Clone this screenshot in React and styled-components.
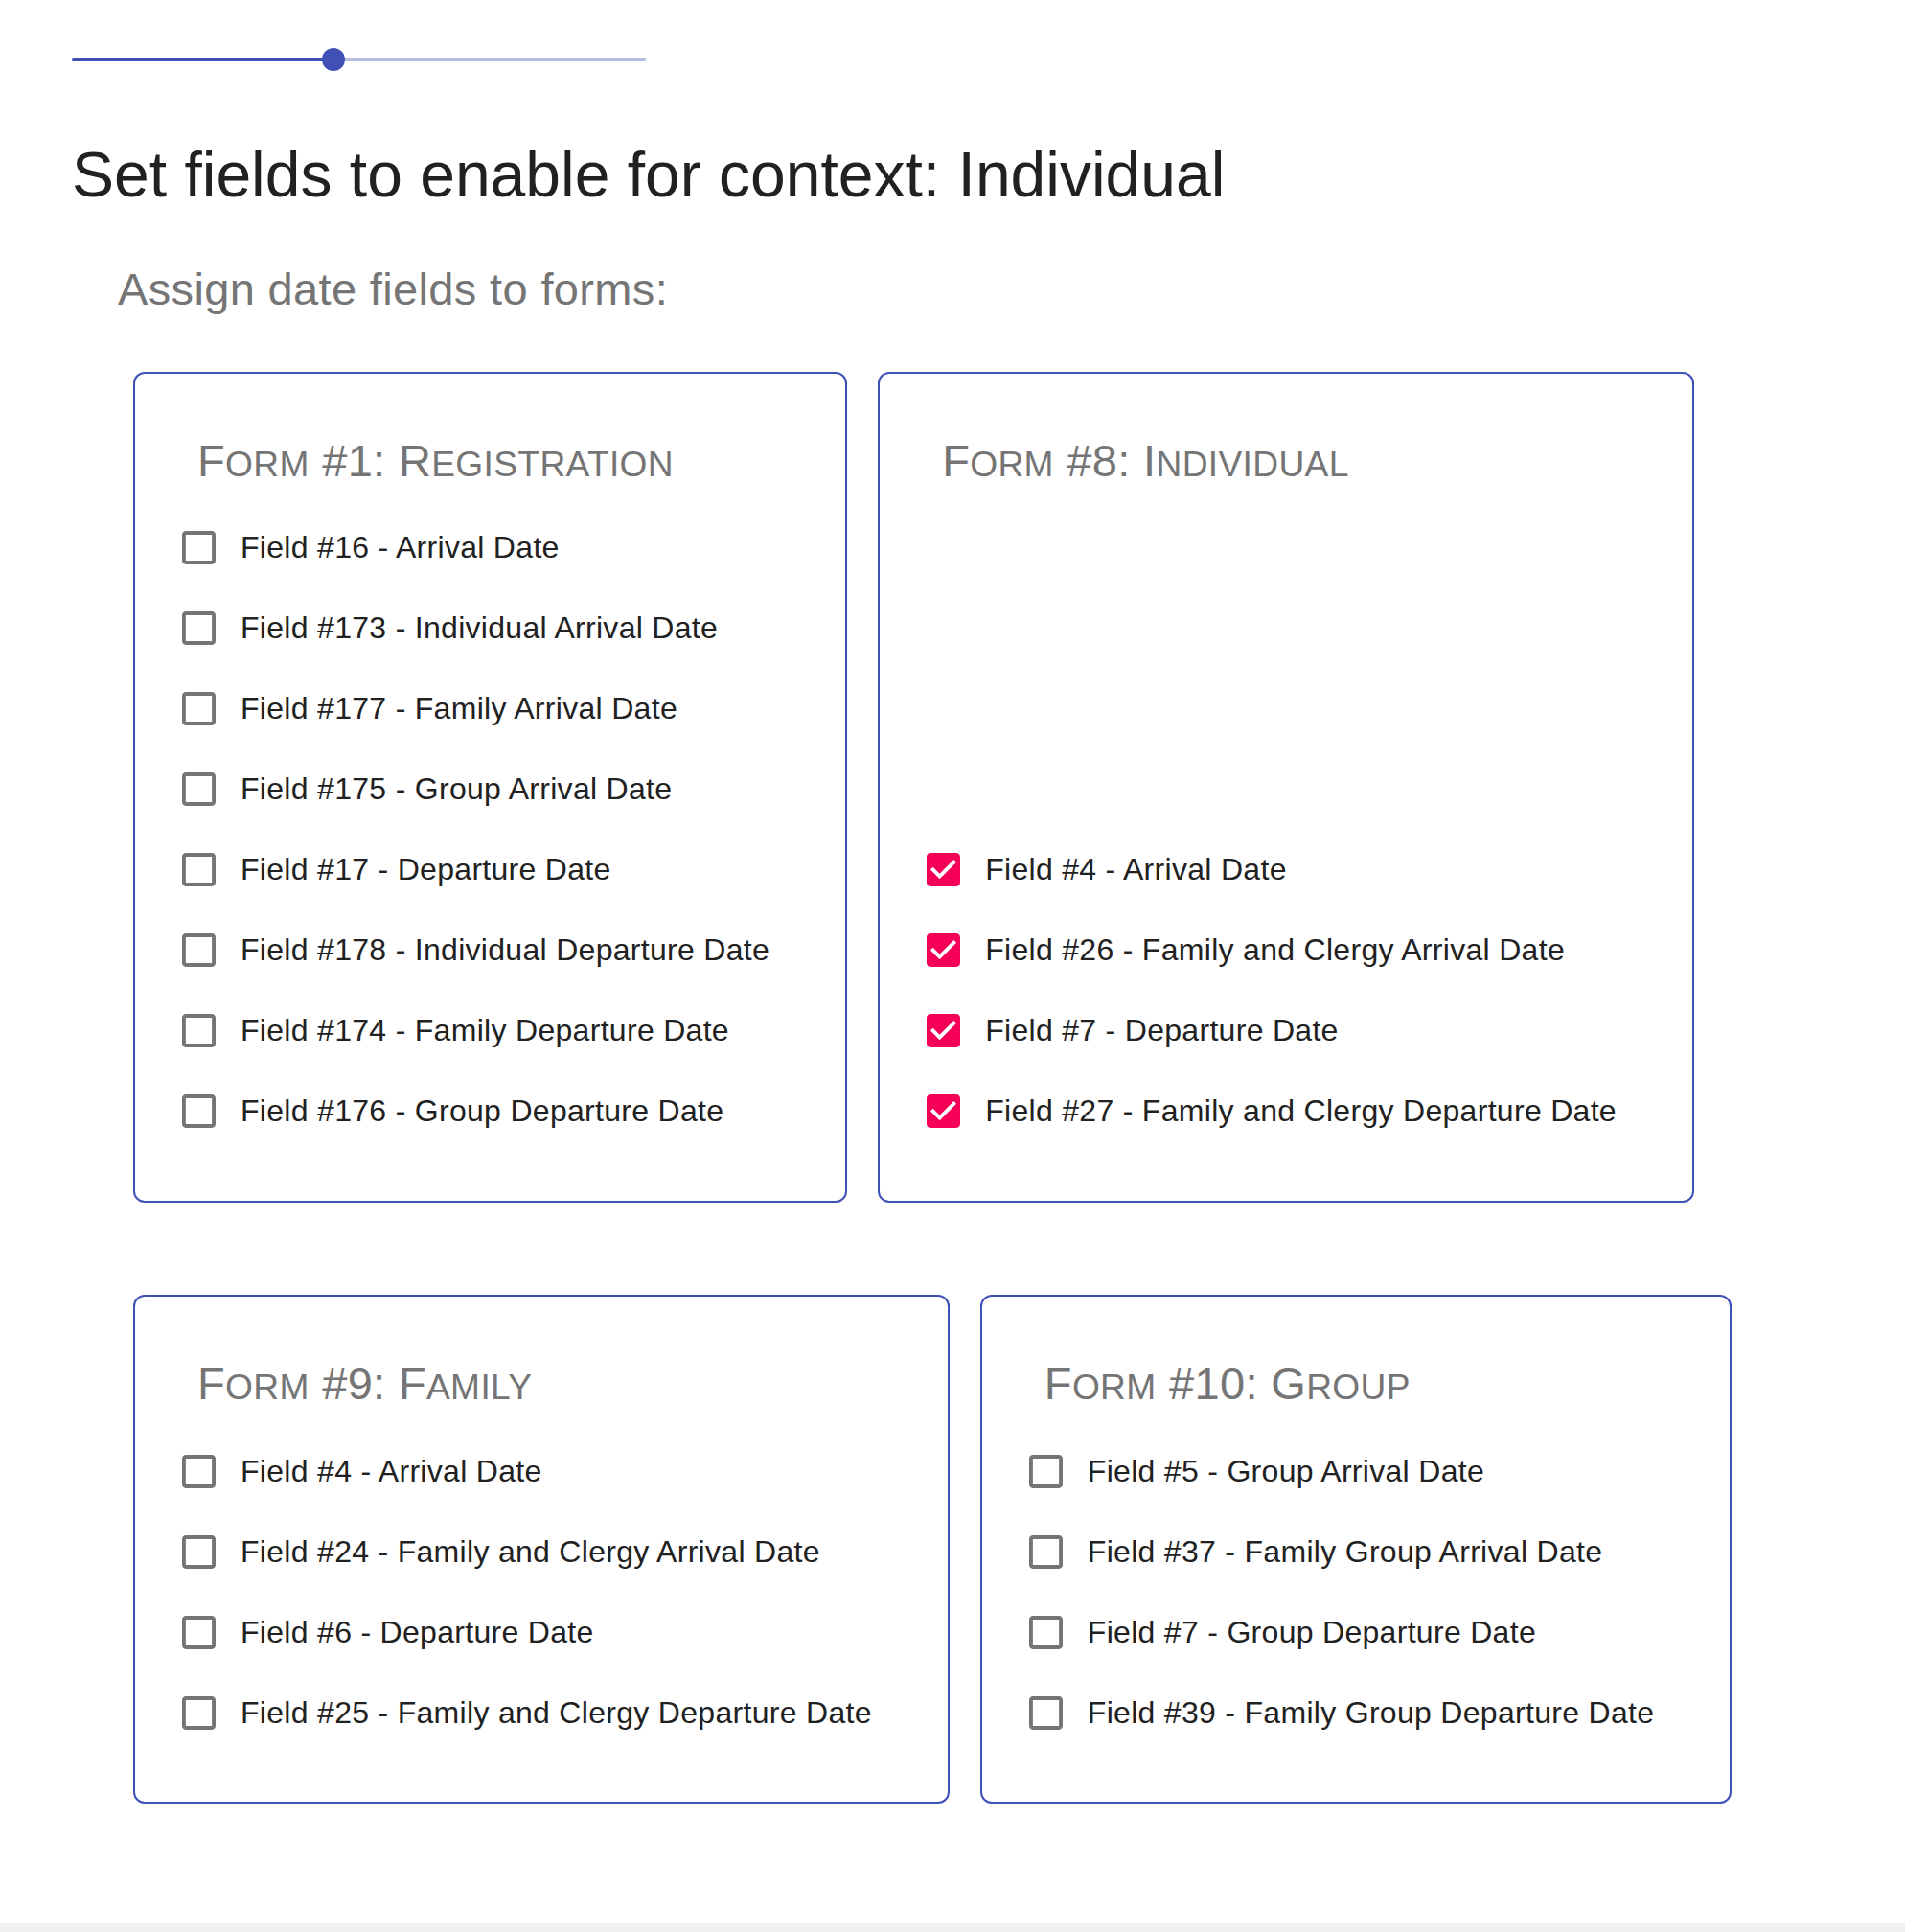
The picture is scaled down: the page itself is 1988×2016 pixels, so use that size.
import React, { useState } from "react";
import styled, { createGlobalStyle } from "styled-components";

const GlobalStyle = createGlobalStyle`
  body {
    margin: 0;
    background: #f0f0f0;
    font-family: "Liberation Sans", Arial, Helvetica, sans-serif;
  }
`;

const Page = styled.div`
  box-sizing: border-box;
  min-height: 2007px;
  background: #fff;
  padding: 50px 0 0 75px;
`;

const Slider = styled.div`
  position: relative;
  width: 599px;
  height: 24px;
  display: flex;
  align-items: center;
`;

const TrackActive = styled.div`
  height: 3px;
  background: #3f51b5;
  border-radius: 2px 0 0 2px;
`;

const TrackRest = styled.div`
  flex: 1;
  height: 3px;
  background: rgb(182, 189, 227);
  border-radius: 0 2px 2px 0;
`;

const Thumb = styled.span`
  position: absolute;
  top: 0;
  width: 24px;
  height: 24px;
  margin-left: -12px;
  border-radius: 50%;
  background: #3f51b5;
`;

const Title = styled.h1`
  margin: 69px 0 0;
  font-size: 66px;
  line-height: 1.2;
  font-weight: 400;
  color: #212121;
`;

const Section = styled.div`
  padding-left: 48px;
`;

const Subtitle = styled.h2`
  margin: 52px 0 0;
  font-size: 47px;
  line-height: 1.2;
  font-weight: 400;
  letter-spacing: 0.35px;
  color: #757575;
`;

const Cards = styled.div`
  margin: 57px 0 0 16px;
  display: flex;
  flex-wrap: wrap;
  column-gap: 32px;
  row-gap: 96px;
`;

const Card = styled.div`
  display: flex;
  flex-direction: column;
  justify-content: space-between;
  border: 2px solid #3f51b5;
  border-radius: 12px;
  padding: 63px 79px 51px 49px;
  background: #fff;
`;

const Heading = styled.h3`
  margin: 0 0 21px 16px;
  font-size: 47px;
  line-height: 1.2;
  font-weight: 400;
  letter-spacing: 0.35px;
  color: #757575;
`;

const Low = styled.span`
  font-size: 0.79em;
  text-transform: uppercase;
`;

const List = styled.div`
  display: flex;
  flex-direction: column;
`;

const Row = styled.label`
  display: flex;
  align-items: center;
  gap: 26px;
  height: 84px;
  font-size: 32px;
  letter-spacing: 0.3px;
  color: #212121;
  white-space: nowrap;
  cursor: pointer;
`;

const Box = styled.svg`
  flex: none;
  width: 35px;
  height: 35px;
  fill: ${(p) => (p.$on ? "#f50057" : "#757575")};
`;

const forms = [
  {
    title: "Form #1: Registration",
    checked: false,
    fields: [
      "Field #16 - Arrival Date",
      "Field #173 - Individual Arrival Date",
      "Field #177 - Family Arrival Date",
      "Field #175 - Group Arrival Date",
      "Field #17 - Departure Date",
      "Field #178 - Individual Departure Date",
      "Field #174 - Family Departure Date",
      "Field #176 - Group Departure Date",
    ],
  },
  {
    title: "Form #8: Individual",
    checked: true,
    fields: [
      "Field #4 - Arrival Date",
      "Field #26 - Family and Clergy Arrival Date",
      "Field #7 - Departure Date",
      "Field #27 - Family and Clergy Departure Date",
    ],
  },
  {
    title: "Form #9: Family",
    checked: false,
    fields: [
      "Field #4 - Arrival Date",
      "Field #24 - Family and Clergy Arrival Date",
      "Field #6 - Departure Date",
      "Field #25 - Family and Clergy Departure Date",
    ],
  },
  {
    title: "Form #10: Group",
    checked: false,
    fields: [
      "Field #5 - Group Arrival Date",
      "Field #37 - Family Group Arrival Date",
      "Field #7 - Group Departure Date",
      "Field #39 - Family Group Departure Date",
    ],
  },
];

// lowercase runs become smaller capitals
const smallCaps = (text) =>
  text.split(/([a-z]+)/).map((part, i) =>
    /^[a-z]+$/.test(part) ? <Low key={i}>{part}</Low> : part
  );

const CheckIcon = ({ on }) => (
  <Box $on={on} viewBox="3 3 18 18">
    {on ? (
      <path d="M19 3H5c-1.11 0-2 .9-2 2v14c0 1.1.89 2 2 2h14c1.11 0 2-.9 2-2V5c0-1.1-.89-2-2-2zm-9 14l-5-5 1.41-1.41L10 14.17l7.59-7.59L19 8l-9 9z" />
    ) : (
      <path d="M19 5v14H5V5h14m0-2H5c-1.1 0-2 .9-2 2v14c0 1.1.9 2 2 2h14c1.1 0 2-.9 2-2V5c0-1.1-.9-2-2-2z" />
    )}
  </Box>
);

const FormCard = ({ form }) => {
  const [on, setOn] = useState(form.fields.map(() => form.checked));
  return (
    <Card>
      <Heading>{smallCaps(form.title)}</Heading>
      <List>
        {form.fields.map((f, i) => (
          <Row
            key={f}
            onClick={() => setOn(on.map((v, j) => (j === i ? !v : v)))}
          >
            <CheckIcon on={on[i]} />
            {f}
          </Row>
        ))}
      </List>
    </Card>
  );
};

export default function App() {
  const pct = 45.6;
  return (
    <>
      <GlobalStyle />
      <Page>
        <Slider>
          <TrackActive style={{ width: `${pct}%` }} />
          <TrackRest />
          <Thumb style={{ left: `${pct}%` }} />
        </Slider>
        <Title>Set fields to enable for context: Individual</Title>
        <Section>
          <Subtitle>Assign date fields to forms:</Subtitle>
          <Cards>
            {forms.map((form) => (
              <FormCard key={form.title} form={form} />
            ))}
          </Cards>
        </Section>
      </Page>
    </>
  );
}
